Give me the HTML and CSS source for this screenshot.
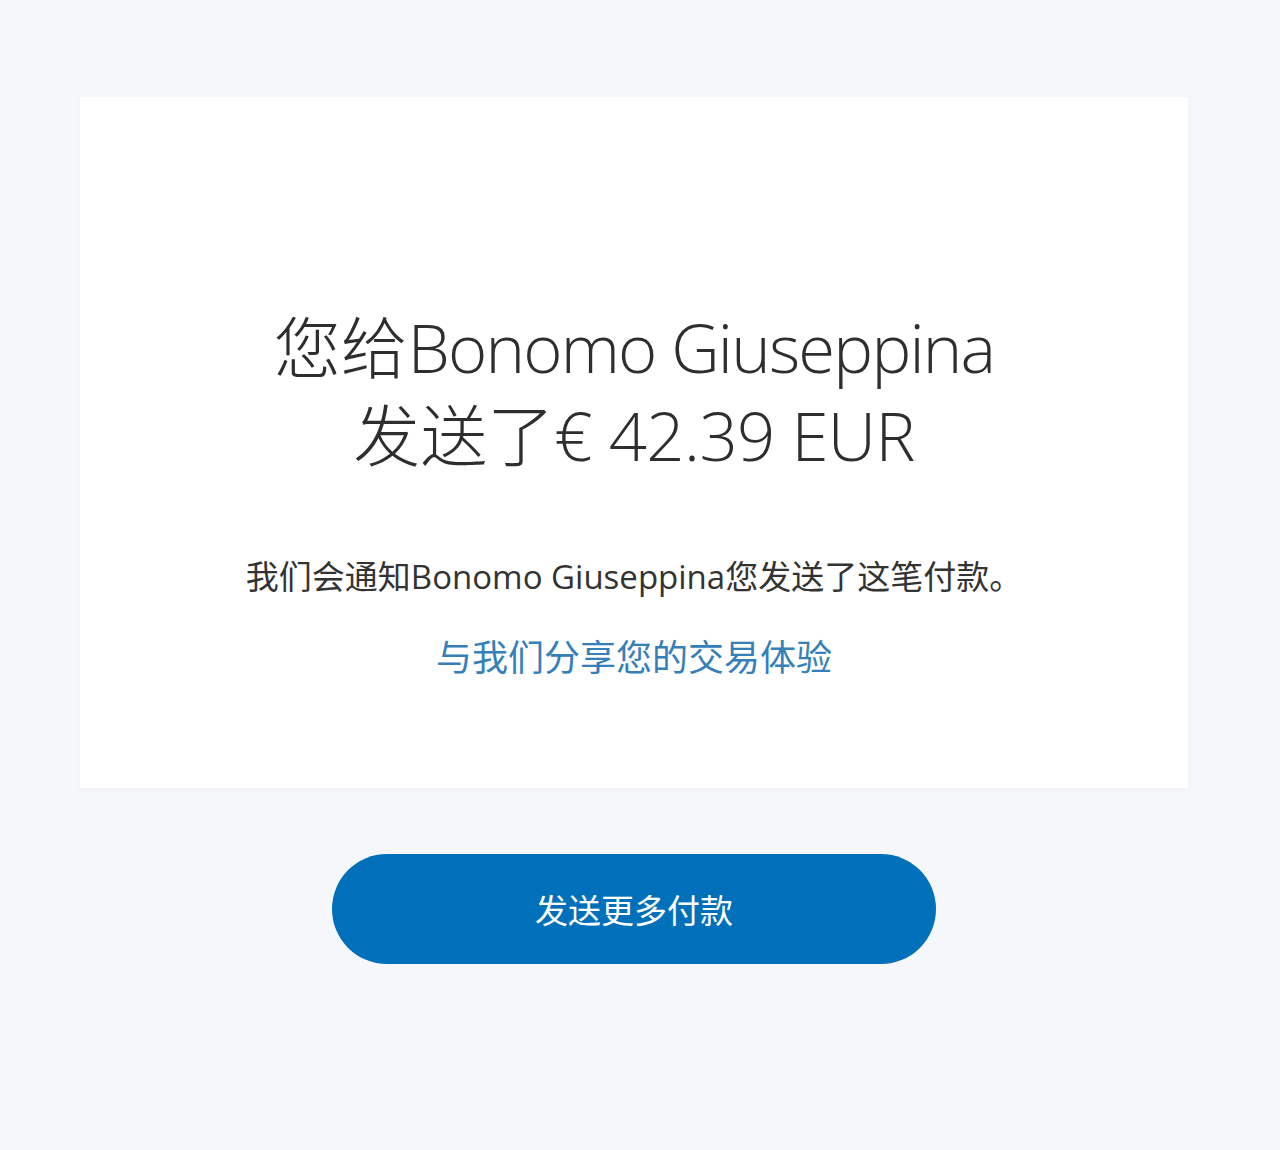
FILE: index.html
```html
<!DOCTYPE html>
<html lang="zh-CN">
<head>
    <meta charset="UTF-8">
    <meta name="viewport" content="width=device-width, initial-scale=1.0">
    <title>付款已发送</title>
    <link rel="stylesheet" href="styles.css">
</head>
<body>
    <div class="page">
        <div class="card">
            <h1 class="title">您给<span class="name">Bonomo Giuseppina</span><br>发送了<span class="amount">€ 42.39 EUR</span></h1>
            <p class="note">我们会通知Bonomo Giuseppina您发送了这笔付款。</p>
            <a class="share" href="#">与我们分享您的交易体验</a>
        </div>
        <button class="more-btn">发送更多付款</button>
    </div>
</body>
</html>
```

FILE: styles.css
```css
body {
    margin: 0;
    background: #f5f7fa;
    font-family: "Open Sans", "Noto Sans CJK SC", sans-serif;
    color: #2c2e2f;
}

.page {
    width: 1108px;
    margin-left: 80px;
    padding-top: 97px;
    display: flex;
    flex-direction: column;
    align-items: center;
}

.card {
    width: 100%;
    height: 691px;
    box-sizing: border-box;
    background: #fff;
    box-shadow: 0 1px 6px rgba(0, 0, 0, 0.03);
    padding-top: 206px;
    display: flex;
    flex-direction: column;
    align-items: center;
    text-align: center;
}

.title {
    margin: 0;
    font-size: 67px;
    font-weight: 300;
    line-height: 88px;
}

.title .name {
    letter-spacing: -1.8px;
}

.title .amount {
    letter-spacing: -0.6px;
}

.note {
    margin: 78px 0 0;
    font-size: 33px;
    line-height: 40px;
    color: #333;
}

.share {
    margin-top: 40px;
    font-size: 36px;
    line-height: 42px;
    color: #3580b9;
    text-decoration: none;
}

.more-btn {
    margin-top: 66px;
    width: 604px;
    height: 110px;
    border: none;
    border-radius: 55px;
    background-color: #0070ba;
    color: #fff;
    font-family: "Open Sans", "Noto Sans CJK SC", sans-serif;
    font-size: 33px;
    font-weight: 400;
    cursor: pointer;
}
```
